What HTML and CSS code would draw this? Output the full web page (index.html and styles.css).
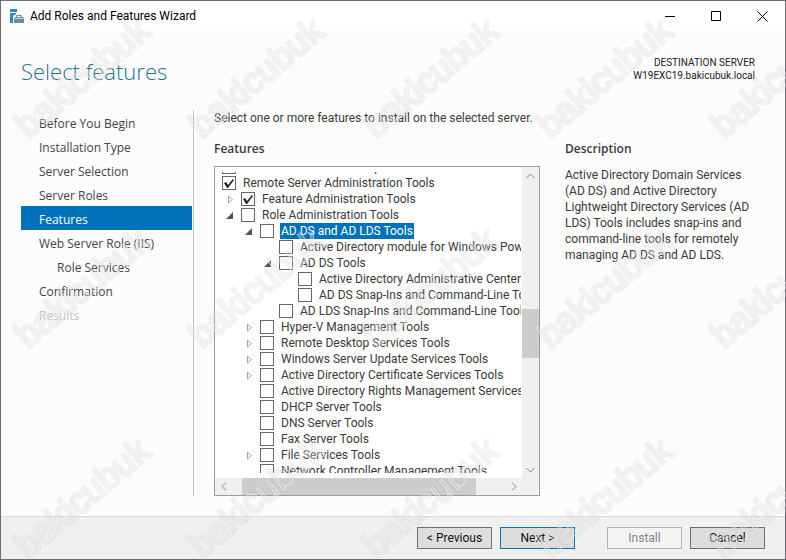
FILE: index.html
```html
<!DOCTYPE html>
<html lang="en">
<head>
    <meta charset="UTF-8">
    <meta name="viewport" content="width=device-width, initial-scale=1.0">
    <title>Add Roles and Features Wizard</title>
    <link rel="stylesheet" href="styles.css">
</head>
<body>
    <div class="window">
        <div class="titlebar">
            <svg class="app-icon" width="15" height="14" viewBox="0 0 15 14">
                <path fill="#2b88d0" d="M0 0h7v3H0zM0 4h6v1L3 7v7H0z"/>
                <path fill="none" stroke="#6f8a9c" d="M6.500 8V6.500h5V8"/>
                <path fill="#6f8a9c" d="M5 8h8l1 2v4H4v-4z"/>
                <path stroke="#c8d6de" d="M5 9.500h8"/>
            </svg>
            <span class="title">Add Roles and Features Wizard</span>
            <button class="win-btn" aria-label="Minimize"><svg width="11" height="11"><path d="M0 5.500h10"/></svg></button>
            <button class="win-btn" aria-label="Maximize"><svg width="11" height="11"><path d="M.5 .5h9v9h-9z"/></svg></button>
            <button class="win-btn" aria-label="Close"><svg width="11" height="11"><path d="M.5 .5l10 10M10.500 .5l-10 10"/></svg></button>
        </div>

        <div class="header">
            <h1>Select features</h1>
            <div class="server">DESTINATION SERVER<br>W19EXC19.bakicubuk.local</div>
        </div>

        <div class="content">
            <nav class="steps">
                <a href="#">Before You Begin</a>
                <a href="#">Installation Type</a>
                <a href="#">Server Selection</a>
                <a href="#">Server Roles</a>
                <a href="#" class="active">Features</a>
                <a href="#">Web Server Role (IIS)</a>
                <a href="#" class="sub">Role Services</a>
                <a href="#">Confirmation</a>
                <a class="disabled">Results</a>
            </nav>

            <div class="main">
                <p class="intro">Select one or more features to install on the selected server.</p>
                <div class="columns">
                    <h2>Features</h2>
                    <h2>Description</h2>
                    <div class="listbox">
                        <div class="tree" id="tree"></div>
                        <div class="scroll-v">
                            <button aria-label="Scroll up"><svg width="9" height="6"><path d="M.5 5l4-4 4 4"/></svg></button>
                            <div class="track"><div class="thumb"></div></div>
                            <button aria-label="Scroll down"><svg width="9" height="6"><path d="M.5 1l4 4 4-4"/></svg></button>
                        </div>
                        <div class="scroll-h">
                            <button aria-label="Scroll left"><svg width="6" height="9"><path d="M5 .5l-4 4 4 4"/></svg></button>
                            <div class="track"><div class="thumb"></div></div>
                            <button aria-label="Scroll right"><svg width="6" height="9"><path d="M1 .5l4 4-4 4"/></svg></button>
                        </div>
                    </div>
                    <p class="description">Active Directory Domain Services (AD DS) and Active Directory Lightweight Directory Services (AD LDS) Tools includes snap-ins and command-line tools for remotely managing AD DS and AD LDS.</p>
                </div>
            </div>
        </div>

        <div class="footer">
            <button class="btn">&lt; Previous</button>
            <button class="btn default">Next &gt;</button>
            <button class="btn install" disabled>Install</button>
            <button class="btn">Cancel</button>
        </div>
    </div>

    <svg class="watermark" id="watermark" aria-hidden="true"></svg>

    <script src="script.js"></script>
</body>
</html>
```
FILE: styles.css
```css
* {
    box-sizing: border-box;
}
body {
    margin: 0;
    font-family: Roboto, sans-serif;
    font-size: 12px;
    line-height: 16px;
    color: #3a3a3a;
}
button {
    font: inherit;
    color: inherit;
    padding: 0;
    margin: 0;
    border: none;
    background: none;
}
h1, h2, p {
    margin: 0;
}
.window {
    display: flex;
    flex-direction: column;
    height: 100vh;
    border: 1px solid #6e6c70;
    background-color: #fcfcfc;
}

/* title bar */
.titlebar {
    display: flex;
    align-items: center;
    height: 30px;
    padding-left: 9px;
    background-color: white;
    color: black;
}
.title {
    flex: 1;
    margin-left: 5px;
}
.win-btn {
    display: flex;
    align-items: center;
    justify-content: center;
    width: 46px;
    height: 30px;
}
.win-btn path {
    fill: none;
    stroke: black;
}

/* heading */
.header {
    display: flex;
    justify-content: space-between;
    height: 79px;
    padding: 24px 30px 0 20px;
}
h1 {
    font-family: "Open Sans", "Noto Sans", sans-serif;
    font-size: 22px;
    line-height: 32px;
    font-weight: 300;
    color: #1f7391;
}
.server {
    padding-top: 1px;
    font-size: 10px;
    line-height: 13px;
    text-align: right;
    color: #222;
}

.content {
    display: flex;
    flex: 1;
    min-height: 0;
    padding: 0 30px 20px 20px;
}

/* wizard steps */
.steps {
    display: flex;
    flex-direction: column;
    width: 173px;
    border-right: 1px solid #c3c3c3;
    font-family: "Open Sans", "Noto Sans", sans-serif;
}
.steps a {
    height: 24px;
    padding-left: 18px;
    margin-right: 1px;
    line-height: 28px;
    color: #444;
    text-decoration: none;
}
.steps .sub {
    padding-left: 36px;
}
.steps .active {
    background-color: #0072bc;
    color: white;
}
.steps .disabled {
    color: #c4c4c4;
}

.main {
    display: flex;
    flex-direction: column;
    flex: 1;
    min-width: 0;
    padding-left: 20px;
}
.intro {
    line-height: 16px;
}
.columns {
    display: grid;
    grid-template-columns: minmax(0, 1fr) 190px;
    grid-template-rows: 40px minmax(0, 1fr);
    column-gap: 25px;
    flex: 1;
    min-height: 0;
}
h2 {
    padding-top: 15px;
    font-family: "Open Sans", "Noto Sans", sans-serif;
    font-size: 12px;
    line-height: 16px;
    font-weight: 600;
}
.description {
    padding-top: 1px;
}

/* feature list */
.listbox {
    display: grid;
    grid-template-columns: minmax(0, 1fr) 17px;
    grid-template-rows: minmax(0, 1fr) 17px;
    border: 1px solid #9a9da3;
    background-color: white;
}
.tree {
    margin: 5px 1px 5px 0;
    overflow: hidden;
}
.row {
    display: flex;
    align-items: center;
    height: 16px;
    white-space: nowrap;
}
/* the list is scrolled part of the way into its first row */
.row:first-child {
    margin-top: -13px;
}
.row label {
    padding: 0 1px;
    margin-left: 6px;
}
.row.selected label {
    background-color: #0072bc;
    color: white;
}
.row input {
    appearance: none;
    flex: none;
    width: 14px;
    height: 14px;
    margin: 0;
    border: 1px solid #666;
    background-color: white;
}
.row input:checked::before {
    content: "";
    display: block;
    height: 12px;
    background-color: #222;
    clip-path: polygon(1px 6px, 3px 5px, 5px 8px, 10px 2px, 11px 3px, 5px 11px, 4px 11px);
}
.toggle {
    display: flex;
    flex: none;
    width: 7px;
    margin: 0 8px 0 -15px;
}
.toggle .open {
    fill: #555;
}
.toggle .closed {
    fill: white;
    stroke: #a5a5a5;
}

/* scroll bars */
.scroll-v, .scroll-h {
    display: flex;
    background-color: #f0f0f0;
}
.scroll-v {
    flex-direction: column;
}
.scroll-h {
    grid-column: 1 / 3;
    padding-right: 17px;
}
.scroll-v button, .scroll-h button {
    display: flex;
    align-items: center;
    justify-content: center;
    flex: none;
    width: 17px;
    height: 17px;
}
.scroll-h button:first-child {
    margin-right: 10px;
}
.scroll-v path, .scroll-h path {
    fill: none;
    stroke: #868686;
}
.track {
    display: flex;
    flex: 1;
}
.thumb {
    background-color: #cdcdcd;
}
.scroll-v .track {
    flex-direction: column;
    justify-content: center;
    padding-top: 22px;
}
.scroll-v .thumb {
    height: 49px;
}
.scroll-h .thumb {
    width: 89%;
}

/* buttons */
.footer {
    display: flex;
    justify-content: flex-end;
    gap: 8px;
    height: 43px;
    padding: 10px 20px 0;
    border-top: 1px solid #d9d9d9;
    background-color: #f0f0f0;
}
.btn {
    width: 75px;
    height: 22px;
    border: 1px solid #707070;
    background-color: #ddd;
    color: #111;
}
.btn.default {
    border-color: #0072bc;
}
.btn.install {
    margin-left: 24px;
    border-color: #adb2b5;
    background-color: #f4f4f4;
    color: #838383;
}

/* watermark over the whole window */
.watermark {
    position: fixed;
    inset: 0;
    width: 100%;
    height: 100%;
    pointer-events: none;
}
.watermark text {
    font-family: "Liberation Sans", sans-serif;
    font-size: 36px;
}
.watermark .edge {
    fill: rgba(255, 255, 255, 0.2);
    stroke: rgba(110, 110, 110, 0.11);
    stroke-width: 3px;
    stroke-linejoin: round;
}
.watermark .core {
    fill: none;
    stroke: rgba(255, 255, 255, 0.5);
    stroke-width: 1px;
}
```
FILE: script.js
```js
// [level, label, checkbox, arrow]
const features = [
    [0, 'Remote Differential Compression', false, ''],
    [0, 'Remote Server Administration Tools', true, ''],
    [1, 'Feature Administration Tools', true, 'closed'],
    [1, 'Role Administration Tools', false, 'open'],
    [2, 'AD DS and AD LDS Tools', false, 'open'],
    [3, 'Active Directory module for Windows PowerShell', false, ''],
    [3, 'AD DS Tools', false, 'open'],
    [4, 'Active Directory Administrative Center', false, ''],
    [4, 'AD DS Snap-Ins and Command-Line Tools', false, ''],
    [3, 'AD LDS Snap-Ins and Command-Line Tools', false, ''],
    [2, 'Hyper-V Management Tools', false, 'closed'],
    [2, 'Remote Desktop Services Tools', false, 'closed'],
    [2, 'Windows Server Update Services Tools', false, 'closed'],
    [2, 'Active Directory Certificate Services Tools', false, 'closed'],
    [2, 'Active Directory Rights Management Services', false, ''],
    [2, 'DHCP Server Tools', false, ''],
    [2, 'DNS Server Tools', false, ''],
    [2, 'Fax Server Tools', false, ''],
    [2, 'File Services Tools', false, 'closed'],
    [2, 'Network Controller Management Tools', false, '']
];

const arrows = {
    open: '<svg width="7" height="7"><path class="open" d="M7 0v7H0z"/></svg>',
    closed: '<svg width="7" height="9"><path class="closed" d="M2.500 1l4 3.500-4 3.500z"/></svg>'
};

document.getElementById('tree').innerHTML = features.map(([level, label, checked, arrow], i) => `
    <div class="row ${i === 4 ? 'selected' : ''}" style="padding-left: ${7 + level * 19}px">
        ${arrow ? `<button class="toggle" aria-label="Toggle ${label}">${arrows[arrow]}</button>` : ''}
        <input type="checkbox" id="f${i}" ${checked ? 'checked' : ''}>
        <label for="f${i}">${label}</label>
    </div>`).join('');

// repeat the watermark on a 174 x 210 grid
let marks = '';
for (let y = 139; y < window.innerHeight + 100; y += 210) {
    for (let x = 28; x < window.innerWidth; x += 174) {
        const t = `transform="translate(${x} ${y}) rotate(-40)"`;
        marks += `<text class="edge" ${t}>bakicubuk</text><text class="core" ${t}>bakicubuk</text>`;
    }
}
document.getElementById('watermark').innerHTML = marks;
```
